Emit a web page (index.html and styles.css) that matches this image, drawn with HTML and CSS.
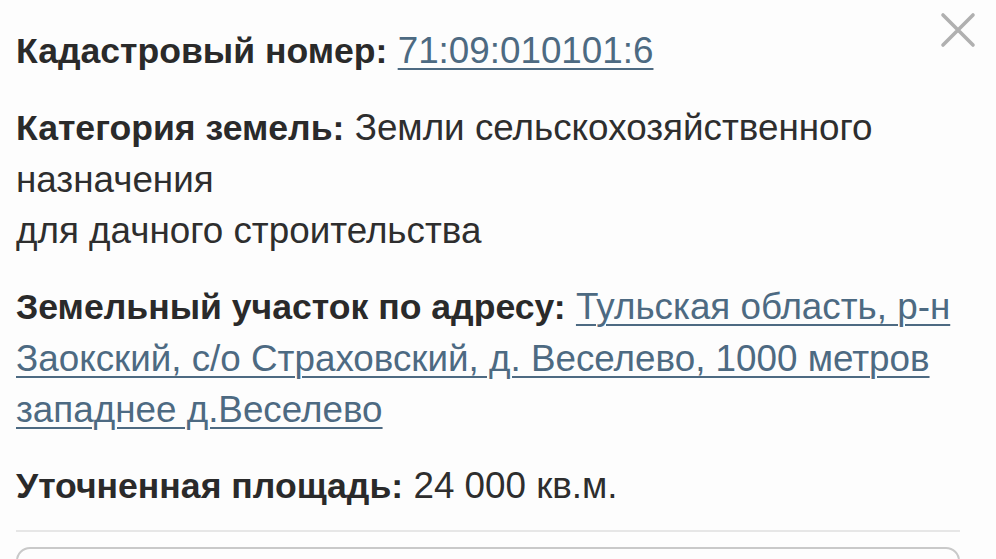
FILE: index.html
```html
<!DOCTYPE html>
<html lang="ru">
<head>
<meta charset="utf-8">
<link rel="stylesheet" href="styles.css">
</head>
<body>
<div class="panel">
  <button class="close" aria-label="Закрыть">
    <svg width="36" height="36" viewBox="0 0 36 36"><path d="M3 3 L33 33 M33 3 L3 33" stroke="#b0b0b0" stroke-width="3.6" stroke-linecap="round"/></svg>
  </button>
  <p class="row"><b>Кадастровый номер:</b> <a href="#">71:09:010101:6</a></p>
  <p class="row"><b>Категория земель:</b> Земли сельскохозяйственного назначения<br>для дачного строительства</p>
  <p class="row"><b>Земельный участок по адресу:</b> <a href="#">Тульская область, р-н Заокский, с/о Страховский, д. Веселево, 1000 метров западнее д.Веселево</a></p>
  <p class="row"><b>Уточненная площадь:</b> 24 000 кв.м.</p>
  <hr class="sep">
  <div class="box"></div>
</div>
</body>
</html>
```
FILE: styles.css
```css
html, body {
  margin: 0;
  padding: 0;
  background: #fdfdfd;
}
body {
  font-family: "Liberation Sans", Arial, sans-serif;
  color: #2e2e2e;
  overflow: hidden;
}
.panel {
  position: relative;
  width: 944px;
  padding: 25px 0 0 16px;
}
.row {
  margin: 0 0 25px 0;
  font-size: 36.8px;
  line-height: 51px;
}
.row b {
  font-weight: bold;
  font-size: 35.6px;
  color: #2a2a2a;
}
.row a {
  color: #4d6a82;
  text-decoration: underline;
  text-decoration-thickness: 2px;
  text-underline-offset: 5px;
}
.close {
  position: absolute;
  top: 12px;
  right: -16px;
  border: 0;
  background: none;
  padding: 0;
  width: 36px;
  height: 36px;
}
.sep {
  border: 0;
  height: 2px;
  background: #e6e6e6;
  margin: 0;
  margin-top: -7px;
}
.box {
  margin-top: 15px;
  height: 60px;
  border: 2px solid #c9c9c9;
  border-radius: 14px;
}
```
